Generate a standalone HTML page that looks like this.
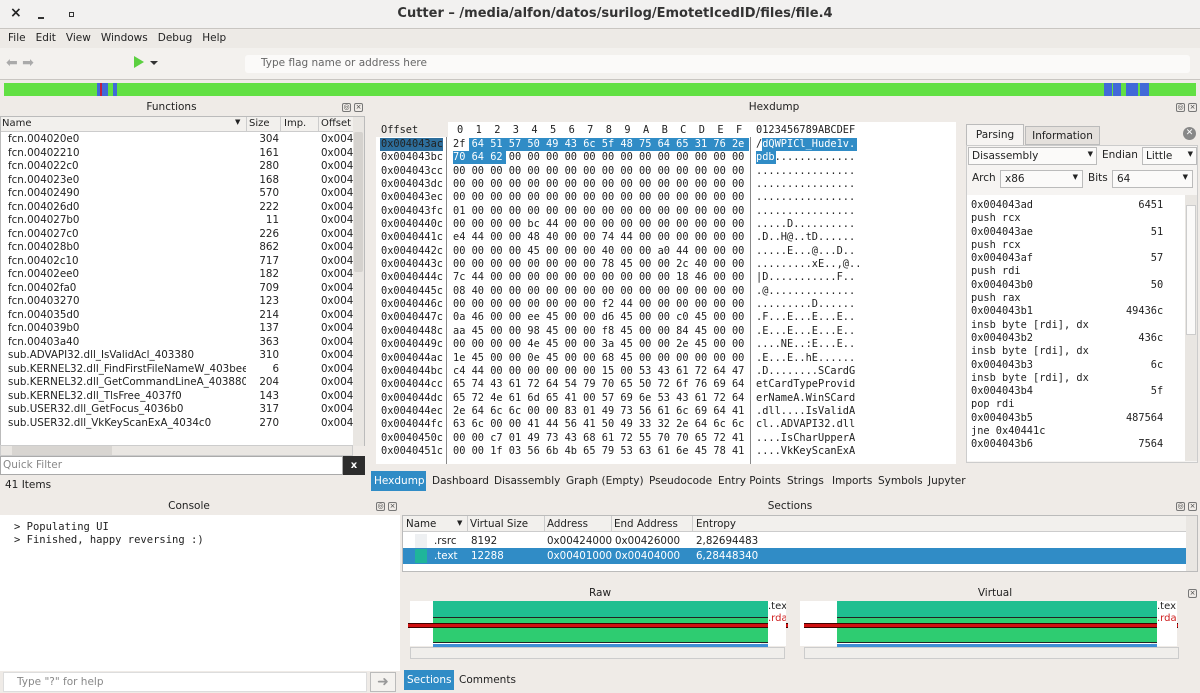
<!DOCTYPE html>
<html><head><meta charset="utf-8"><style>
*{margin:0;padding:0;box-sizing:border-box}
body{width:1200px;height:693px;overflow:hidden;background:#efebe7;font-family:"DejaVu Sans","Liberation Sans",sans-serif;font-size:10px;color:#222;position:relative}
.a{position:absolute}
pre{font-family:"DejaVu Sans Mono","Liberation Mono",monospace;font-size:10.3px;line-height:13.35px;white-space:pre}
.t{font-size:10.5px;text-align:center}
.ic{position:absolute;width:9px;height:9px;border:1px solid #777;border-radius:2px;font-size:7px;line-height:7px;text-align:center;color:#444}
.sel{background:#308cc6;color:#fff}
.tab{position:absolute;height:20px;line-height:20px;font-size:10.5px;padding:0 3px}
.cx{font-size:10.3px;white-space:nowrap}
</style></head><body>
<!-- title bar -->
<div class="a" style="left:0;top:0;width:1200px;height:29px;background:#f2f1f0;border-bottom:1px solid #c9c6c2"></div>
<div class="a" style="left:10px;top:5px;font-size:14px;font-weight:bold">×</div>
<div class="a" style="left:38px;top:17px;width:6px;height:2px;background:#333"></div>
<div class="a" style="left:69px;top:12px;width:5px;height:5px;border:1.5px solid #333"></div>
<div class="a" style="left:0;top:6px;width:1200px;text-align:center;font-size:13px;font-weight:bold;color:#333;padding-left:30px">Cutter – /media/alfon/datos/surilog/EmotetIcedID/files/file.4</div>
<!-- menu -->
<div class="a" style="left:0;top:30px;width:1200px;height:18px;background:#edeae6"></div>
<div class="a" style="left:8px;top:32px;font-size:10.5px">File&nbsp;&nbsp; Edit&nbsp;&nbsp; View&nbsp;&nbsp; Windows&nbsp;&nbsp; Debug&nbsp;&nbsp; Help</div>
<!-- toolbar -->
<div class="a" style="left:0;top:48px;width:1200px;height:32px;background:#f3f1ee;border-bottom:1px solid #c9c6c2"></div>
<div class="a" style="left:6px;top:55px;font-size:14px;color:#aaa">⬅ ➡</div>
<div class="a" style="left:134px;top:56px;width:0;height:0;border-left:10px solid #5bd040;border-top:6px solid transparent;border-bottom:6px solid transparent"></div>
<div class="a" style="left:150px;top:61px;border-top:4px solid #333;border-left:4px solid transparent;border-right:4px solid transparent"></div>
<div class="a" style="left:245px;top:55px;width:945px;height:18px;background:#fbfaf9;border-radius:3px"></div>
<div class="a" style="left:261px;top:57px;font-size:10.5px;color:#666">Type flag name or address here</div>
<!-- green bar -->
<div class="a" style="left:4px;top:83px;width:1192px;height:13px;background:#62e043"></div>
<div class="a" style="left:97px;top:83px;width:11px;height:13px;background:#4169d8"></div>
<div class="a" style="left:100px;top:83px;width:2px;height:13px;background:#c02040"></div>
<div class="a" style="left:113px;top:83px;width:4px;height:13px;background:#4169d8"></div>
<div class="a" style="left:1104px;top:83px;width:8px;height:13px;background:#4169d8"></div>
<div class="a" style="left:1113px;top:83px;width:8px;height:13px;background:#4169d8"></div>
<div class="a" style="left:1126px;top:83px;width:12px;height:13px;background:#4169d8"></div>
<div class="a" style="left:1140px;top:83px;width:9px;height:13px;background:#4169d8"></div>

<!-- Functions panel -->
<div class="a t" style="left:0;top:101px;width:343px">Functions</div>
<div class="ic" style="left:342px;top:103px">◎</div><div class="ic" style="left:354px;top:103px">×</div>
<div class="a" style="left:0;top:116px;width:365px;height:330px;background:#fff;border:1px solid #bbb"></div>
<div class="a" style="left:1px;top:117px;width:352px;height:15px;background:#f2f0ed;border-bottom:1px solid #ccc"></div>
<div class="a" style="left:2px;top:118px">Name</div>
<div class="a" style="left:235px;top:118px;font-size:7px">▼</div>
<div class="a" style="left:246px;top:117px;height:15px;border-left:1px solid #ccc;padding:1px 2px">Size</div>
<div class="a" style="left:280px;top:117px;height:15px;border-left:1px solid #ccc;padding:1px 3px">Imp.</div>
<div class="a" style="left:318px;top:117px;height:15px;border-left:1px solid #ccc;padding:1px 2px">Offset</div>
<div class="a" style="left:353px;top:117px;width:11px;height:329px;background:#e9e6e2"></div>
<div class="a" style="left:354px;top:132px;width:9px;height:140px;background:#d5d2ce;border-radius:2px"></div>
<div class="a" style="left:8px;top:133px;line-height:13.5px;font-size:10.3px">fcn.004020e0<br>fcn.00402210<br>fcn.004022c0<br>fcn.004023e0<br>fcn.00402490<br>fcn.004026d0<br>fcn.004027b0<br>fcn.004027c0<br>fcn.004028b0<br>fcn.00402c10<br>fcn.00402ee0<br>fcn.00402fa0<br>fcn.00403270<br>fcn.004035d0<br>fcn.004039b0<br>fcn.00403a40<br>sub.ADVAPI32.dll_IsValidAcl_403380<br>sub.KERNEL32.dll_FindFirstFileNameW_403bee<br>sub.KERNEL32.dll_GetCommandLineA_403880<br>sub.KERNEL32.dll_TlsFree_4037f0<br>sub.USER32.dll_GetFocus_4036b0<br>sub.USER32.dll_VkKeyScanExA_4034c0</div>
<div class="a" style="left:246px;top:133px;width:33px;text-align:right;line-height:13.5px;font-size:10.3px;background:#fff">304<br>161<br>280<br>168<br>570<br>222<br>11<br>226<br>862<br>717<br>182<br>709<br>123<br>214<br>137<br>363<br>310<br>6<br>204<br>143<br>317<br>270</div>
<div class="a" style="left:321px;top:133px;width:32px;overflow:hidden;line-height:13.5px;font-size:10.3px">0x0040<br>0x0040<br>0x0040<br>0x0040<br>0x0040<br>0x0040<br>0x0040<br>0x0040<br>0x0040<br>0x0040<br>0x0040<br>0x0040<br>0x0040<br>0x0040<br>0x0040<br>0x0040<br>0x0040<br>0x0040<br>0x0040<br>0x0040<br>0x0040<br>0x0040</div>
<div class="a" style="left:0;top:445px;width:353px;height:11px;background:#e9e6e2;border:1px solid #ccc"></div>
<div class="a" style="left:12px;top:446px;width:100px;height:9px;background:#d8d5d1"></div>
<div class="a" style="left:0;top:456px;width:343px;height:19px;background:#fff;border:1px solid #aaa"></div>
<div class="a" style="left:3px;top:459px;color:#888;font-size:10.5px">Quick Filter</div>
<div class="a" style="left:343px;top:456px;width:22px;height:19px;background:#2d2d2d;color:#fff;text-align:center;line-height:19px;font-weight:bold">x</div>
<div class="a" style="left:5px;top:479px;font-size:10.5px">41 Items</div>

<!-- Console -->
<div class="a t" style="left:0;top:500px;width:378px">Console</div>
<div class="ic" style="left:376px;top:502px">◎</div><div class="ic" style="left:388px;top:502px">×</div>
<div class="a" style="left:0;top:515px;width:400px;height:156px;background:#fff"></div>
<pre class="a" style="left:14px;top:521px;font-size:10.5px;line-height:13px">&gt; Populating UI
&gt; Finished, happy reversing :)</pre>
<div class="a" style="left:3px;top:672px;width:364px;height:20px;background:#fff;border:1px solid #ddd"></div>
<div class="a" style="left:17px;top:676px;color:#888;font-size:10.5px">Type "?" for help</div>
<div class="a" style="left:370px;top:672px;width:26px;height:20px;background:#f4f2ef;border:1px solid #bbb;color:#999;text-align:center;font-size:14px;line-height:18px">➜</div>

<!-- Hexdump -->
<div class="a t" style="left:370px;top:101px;width:808px">Hexdump</div>
<div class="ic" style="left:1176px;top:103px">◎</div><div class="ic" style="left:1188px;top:103px">×</div>
<div class="a" style="left:376px;top:122px;width:580px;height:342px;background:#fff"></div>
<div class="a" style="left:376px;top:122px;width:72px;height:15px;background:#efebe7"></div>
<div class="a" style="left:446px;top:137px;width:1px;height:327px;background:#888"></div>
<div class="a" style="left:750px;top:137px;width:1px;height:327px;background:#888"></div>
<pre class="a" style="left:381px;top:124px">Offset</pre>
<pre class="a" style="left:457px;top:124px">0  1  2  3  4  5  6  7  8  9  A  B  C  D  E  F</pre>
<pre class="a" style="left:756px;top:124px">0123456789ABCDEF</pre>
<div class="a" style="left:380px;top:138px;width:63px;height:13px;background:#2d6e9c"></div>
<div class="a" style="left:469px;top:138px;width:280px;height:13px;background:#308cc6"></div>
<div class="a" style="left:453px;top:151px;width:53px;height:13px;background:#308cc6"></div>
<div class="a" style="left:762px;top:138px;width:95px;height:13px;background:#308cc6"></div>
<div class="a" style="left:756px;top:151px;width:20px;height:13px;background:#308cc6"></div>
<pre class="a" style="left:381px;top:138px">0x004043ac
0x004043bc
0x004043cc
0x004043dc
0x004043ec
0x004043fc
0x0040440c
0x0040441c
0x0040442c
0x0040443c
0x0040444c
0x0040445c
0x0040446c
0x0040447c
0x0040448c
0x0040449c
0x004044ac
0x004044bc
0x004044cc
0x004044dc
0x004044ec
0x004044fc
0x0040450c
0x0040451c</pre>
<pre class="a" style="left:453px;top:138px">2f <span style="color:#fff">64 51 57 50 49 43 6c 5f 48 75 64 65 31 76 2e</span>
<span style="color:#fff">70 64 62</span> 00 00 00 00 00 00 00 00 00 00 00 00 00
00 00 00 00 00 00 00 00 00 00 00 00 00 00 00 00
00 00 00 00 00 00 00 00 00 00 00 00 00 00 00 00
00 00 00 00 00 00 00 00 00 00 00 00 00 00 00 00
01 00 00 00 00 00 00 00 00 00 00 00 00 00 00 00
00 00 00 00 bc 44 00 00 00 00 00 00 00 00 00 00
e4 44 00 00 48 40 00 00 74 44 00 00 00 00 00 00
00 00 00 00 45 00 00 00 40 00 00 a0 44 00 00 00
00 00 00 00 00 00 00 00 78 45 00 00 2c 40 00 00
7c 44 00 00 00 00 00 00 00 00 00 00 18 46 00 00
08 40 00 00 00 00 00 00 00 00 00 00 00 00 00 00
00 00 00 00 00 00 00 00 f2 44 00 00 00 00 00 00
0a 46 00 00 ee 45 00 00 d6 45 00 00 c0 45 00 00
aa 45 00 00 98 45 00 00 f8 45 00 00 84 45 00 00
00 00 00 00 4e 45 00 00 3a 45 00 00 2e 45 00 00
1e 45 00 00 0e 45 00 00 68 45 00 00 00 00 00 00
c4 44 00 00 00 00 00 00 15 00 53 43 61 72 64 47
65 74 43 61 72 64 54 79 70 65 50 72 6f 76 69 64
65 72 4e 61 6d 65 41 00 57 69 6e 53 43 61 72 64
2e 64 6c 6c 00 00 83 01 49 73 56 61 6c 69 64 41
63 6c 00 00 41 44 56 41 50 49 33 32 2e 64 6c 6c
00 00 c7 01 49 73 43 68 61 72 55 70 70 65 72 41
00 00 1f 03 56 6b 4b 65 79 53 63 61 6e 45 78 41</pre>
<pre class="a" style="left:756px;top:138px">/<span style="color:#fff">dQWPICl_Hude1v.</span>
<span style="color:#fff">pdb</span>.............
................
................
................
................
.....D..........
.D..H@..tD......
.....E...@...D..
.........xE..,@..
|D...........F..
.@..............
.........D......
.F...E...E...E..
.E...E...E...E..
....NE..:E...E..
.E...E..hE......
.D........SCardG
etCardTypeProvid
erNameA.WinSCard
.dll....IsValidA
cl..ADVAPI32.dll
....IsCharUpperA
....VkKeyScanExA</pre>
<!-- tabs -->
<div class="tab sel" style="left:371px;top:471px;width:55px">Hexdump</div>
<div class="a" style="left:432px;top:475px;font-size:10.5px">Dashboard</div>
<div class="a" style="left:494px;top:475px;font-size:10.5px">Disassembly</div>
<div class="a" style="left:566px;top:475px;font-size:10.5px">Graph (Empty)</div>
<div class="a" style="left:649px;top:475px;font-size:10.5px">Pseudocode</div>
<div class="a" style="left:718px;top:475px;font-size:10.5px">Entry Points</div>
<div class="a" style="left:787px;top:475px;font-size:10.5px">Strings</div>
<div class="a" style="left:832px;top:475px;font-size:10.5px">Imports</div>
<div class="a" style="left:878px;top:475px;font-size:10.5px">Symbols</div>
<div class="a" style="left:928px;top:475px;font-size:10.5px">Jupyter</div>

<!-- Parsing panel -->
<div class="a" style="left:966px;top:124px;width:58px;height:21px;background:#f6f4f2;border:1px solid #bbb;border-bottom:none;text-align:center;line-height:20px;font-size:10.5px">Parsing</div>
<div class="a" style="left:1025px;top:126px;width:75px;height:19px;background:#e4e0dc;border:1px solid #bbb;text-align:center;line-height:18px;font-size:10.5px">Information</div>
<div class="a" style="left:1183px;top:127px;width:13px;height:13px;border-radius:50%;background:#888;color:#fff;font-size:9px;text-align:center;line-height:13px">✕</div>
<div class="a" style="left:966px;top:145px;width:232px;height:318px;background:#f6f4f2;border:1px solid #ccc"></div>
<div class="a" style="left:968px;top:147px;width:129px;height:18px;background:#fbfaf9;border:1px solid #bbb;padding:2px 3px;font-size:10.5px">Disassembly<span style="float:right;font-size:7px">▼</span></div>
<div class="a" style="left:1102px;top:149px;font-size:10.5px">Endian</div>
<div class="a" style="left:1142px;top:147px;width:55px;height:18px;background:#fbfaf9;border:1px solid #bbb;padding:2px 3px;font-size:10.5px">Little<span style="float:right;font-size:7px">▼</span></div>
<div class="a" style="left:972px;top:172px;font-size:10.5px">Arch</div>
<div class="a" style="left:1000px;top:170px;width:83px;height:18px;background:#fbfaf9;border:1px solid #bbb;padding:2px 4px;font-size:10.5px">x86<span style="float:right;font-size:7px">▼</span></div>
<div class="a" style="left:1088px;top:172px;font-size:10.5px">Bits</div>
<div class="a" style="left:1112px;top:170px;width:81px;height:18px;background:#fbfaf9;border:1px solid #bbb;padding:2px 4px;font-size:10.5px">64<span style="float:right;font-size:7px">▼</span></div>
<div class="a" style="left:967px;top:195px;width:218px;height:266px;background:#fff"></div>
<div class="a" style="left:1185px;top:195px;width:12px;height:266px;background:#e9e6e2"></div>
<div class="a" style="left:1186px;top:205px;width:10px;height:130px;background:#fbfaf9;border:1px solid #ccc"></div>
<pre class="a" style="left:971px;top:199px;line-height:13.3px">0x004043ad                 6451
push rcx
0x004043ae                   51
push rcx
0x004043af                   57
push rdi
0x004043b0                   50
push rax
0x004043b1               49436c
insb byte [rdi], dx
0x004043b2                 436c
insb byte [rdi], dx
0x004043b3                   6c
insb byte [rdi], dx
0x004043b4                   5f
pop rdi
0x004043b5               487564
jne 0x40441c
0x004043b6                 7564</pre>

<!-- Sections -->
<div class="a t" style="left:400px;top:500px;width:780px">Sections</div>
<div class="ic" style="left:1176px;top:502px">◎</div><div class="ic" style="left:1188px;top:502px">×</div>
<div class="a" style="left:402px;top:515px;width:796px;height:57px;background:#fff;border:1px solid #bbb"></div>
<div class="a" style="left:403px;top:516px;width:783px;height:16px;background:#f2f0ed;border-bottom:1px solid #ccc"></div>
<div class="a cx" style="left:406px;top:518px">Name</div><div class="a" style="left:457px;top:519px;font-size:7px">▼</div>
<div class="a" style="left:467px;top:516px;height:16px;border-left:1px solid #ccc"></div><div class="a cx" style="left:470px;top:518px">Virtual Size</div>
<div class="a" style="left:544px;top:516px;height:16px;border-left:1px solid #ccc"></div><div class="a cx" style="left:547px;top:518px">Address</div>
<div class="a" style="left:611px;top:516px;height:16px;border-left:1px solid #ccc"></div><div class="a cx" style="left:614px;top:518px">End Address</div>
<div class="a" style="left:692px;top:516px;height:16px;border-left:1px solid #ccc"></div><div class="a cx" style="left:696px;top:518px">Entropy</div>
<div class="a" style="left:1186px;top:516px;width:11px;height:55px;background:#e9e6e2"></div>
<div class="a" style="left:415px;top:534px;width:12px;height:14px;background:#eef0f2"></div>
<div class="a cx" style="left:434px;top:535px">.rsrc</div>
<div class="a cx" style="left:471px;top:535px">8192</div>
<div class="a cx" style="left:547px;top:535px">0x00424000</div>
<div class="a cx" style="left:615px;top:535px">0x00426000</div>
<div class="a cx" style="left:696px;top:535px">2,82694483</div>
<div class="a sel" style="left:403px;top:548px;width:783px;height:16px"></div>
<div class="a" style="left:415px;top:549px;width:12px;height:14px;background:#1fb59a"></div>
<div class="a cx" style="left:434px;top:550px;color:#fff">.text</div>
<div class="a cx" style="left:471px;top:550px;color:#fff">12288</div>
<div class="a cx" style="left:547px;top:550px;color:#fff">0x00401000</div>
<div class="a cx" style="left:615px;top:550px;color:#fff">0x00404000</div>
<div class="a cx" style="left:696px;top:550px;color:#fff">6,28448340</div>
<div class="a t" style="left:410px;top:587px;width:380px">Raw</div>
<div class="a t" style="left:800px;top:587px;width:390px">Virtual</div>
<div class="ic" style="left:1188px;top:589px">×</div>
<!-- graphs -->
<div class="a" style="left:410px;top:601px;width:351px;height:45px;background:#fff"></div>
<div class="a" style="left:433px;top:601px;width:335px;height:17px;background:#1fbf90;border-bottom:1px solid #222"></div>
<div class="a" style="left:433px;top:618px;width:335px;height:25px;background:#2ecc71;border-bottom:1px solid #222"></div>
<div class="a" style="left:433px;top:644px;width:335px;height:3px;background:#3d8fd6"></div>
<div class="a" style="left:408px;top:623px;width:380px;height:5px;background:#d01010;border-top:1px solid #400;border-bottom:1px solid #400"></div>
<div class="a" style="left:768px;top:601px;width:18px;height:45px;background:#fff;font-size:10px;line-height:12px;overflow:hidden">.tex<br><span style="color:#d02020">.rda</span></div>
<div class="a" style="left:410px;top:647px;width:375px;height:12px;background:#f0eeeb;border:1px solid #ccc"></div>
<div class="a" style="left:800px;top:601px;width:351px;height:45px;background:#fff"></div>
<div class="a" style="left:837px;top:601px;width:320px;height:17px;background:#1fbf90;border-bottom:1px solid #222"></div>
<div class="a" style="left:837px;top:618px;width:320px;height:25px;background:#2ecc71;border-bottom:1px solid #222"></div>
<div class="a" style="left:837px;top:644px;width:320px;height:3px;background:#3d8fd6"></div>
<div class="a" style="left:804px;top:623px;width:374px;height:5px;background:#d01010;border-top:1px solid #400;border-bottom:1px solid #400"></div>
<div class="a" style="left:1157px;top:601px;width:20px;height:45px;background:#fff;font-size:10px;line-height:12px;overflow:hidden">.tex<br><span style="color:#d02020">.rda</span></div>
<div class="a" style="left:804px;top:647px;width:375px;height:12px;background:#f0eeeb;border:1px solid #ccc"></div>
<div class="tab sel" style="left:404px;top:670px">Sections</div>
<div class="a" style="left:459px;top:674px;font-size:10.5px">Comments</div>
</body></html>
